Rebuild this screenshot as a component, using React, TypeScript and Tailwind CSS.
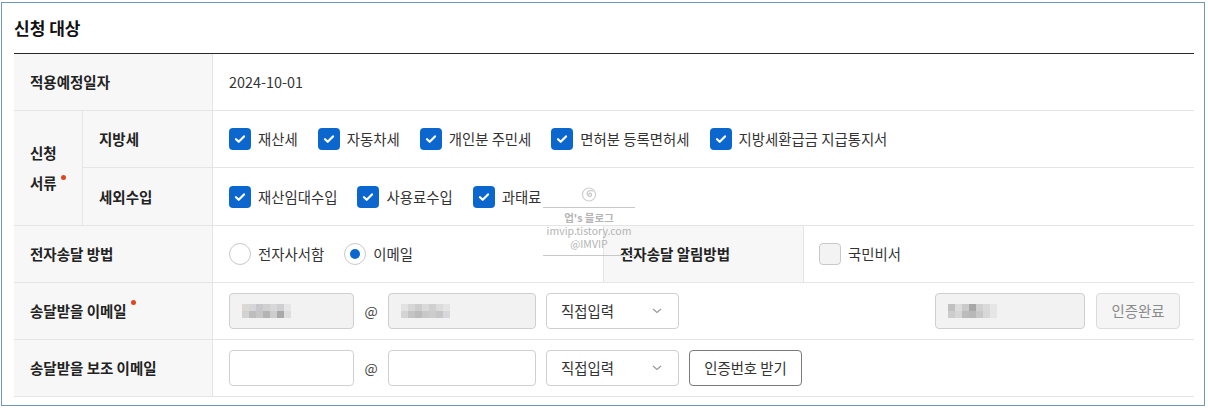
const font = { fontFamily: '"Noto Sans CJK KR", "Noto Sans", sans-serif' };

function CheckBox({ checked = true }: { checked?: boolean }) {
  if (!checked) {
    return <span className="w-[22px] h-[22px] rounded-[4px] border border-[#c9c9c9] bg-[#f3f3f3] shrink-0" />;
  }
  return (
    <span className="w-[22px] h-[22px] rounded-[4px] bg-[#0b67cd] shrink-0 flex items-center justify-center">
      <svg width="14" height="14" viewBox="0 0 14 14" fill="none">
        <path d="M3 7.2l2.7 2.6L11 4.4" stroke="white" strokeWidth="2.2" strokeLinecap="round" strokeLinejoin="round" />
      </svg>
    </span>
  );
}

function Check({ label, checked = true }: { label: string; checked?: boolean }) {
  return (
    <label className="flex items-center gap-[7px] text-[14.4px] text-[#333]">
      <CheckBox checked={checked} />
      {label}
    </label>
  );
}

function Radio({ label, checked }: { label: string; checked?: boolean }) {
  return (
    <label className="flex items-center gap-[7px] text-[14.4px] text-[#333]">
      <span className="w-[22px] h-[22px] rounded-full border border-[#c9c9c9] bg-white flex items-center justify-center shrink-0">
        {checked && <span className="w-[10px] h-[10px] rounded-full bg-[#0b67cd]" />}
      </span>
      {label}
    </label>
  );
}

// pixelated (blurred) placeholder
function Blur({ cells }: { cells: string[] }) {
  return (
    <div className="grid grid-cols-[repeat(7,7px)] grid-rows-[7px_7px]">
      {cells.map((c, i) => (
        <span key={i} style={{ backgroundColor: c }} />
      ))}
    </div>
  );
}

const blurA = ['#dcd8d4', '#d6d6da', '#c8c8cc', '#d0d0d0', '#d8d8d8', '#cfcfd2', '#e6e6e6', '#d2d2d2', '#bdbdbd', '#c6c6c6', '#b4b4b4', '#cdcdcd', '#a9a9a9', '#dedede'];
const blurB = ['#e2e2e2', '#d6d6d6', '#cccccc', '#dadada', '#d0d0d0', '#dcdcdc', '#e4e4e4', '#d4d4d4', '#c4c4c4', '#bcbcbc', '#c8c8c8', '#cccccc', '#c6c6c6', '#d8d8dc'];
const blurC = ['#c0c0c0', '#dcdcdc', '#cacaca', '#a8a8a8', '#d0d0d0', '#dadada', '#e6e6e6', '#cccccc', '#d6d6d6', '#bcbcbc', '#b8b8b8', '#c8c8c8', '#d8d8d8', '#e6e6e6'];

function Input({ w, disabled, blur }: { w: string; disabled?: boolean; blur?: string[] }) {
  return (
    <div className={`${w} h-[36px] rounded-[4px] border border-[#cfcfcf] flex items-center pl-[12px] ${disabled ? 'bg-[#f2f2f2]' : 'bg-white'}`}>
      {blur && <Blur cells={blur} />}
    </div>
  );
}

function Select() {
  return (
    <div className="w-[133px] h-[36px] rounded-[4px] border border-[#cfcfcf] bg-white flex items-center justify-between pl-[14px] pr-[16px] text-[14.4px] text-[#333]">
      직접입력
      <svg width="10" height="6" viewBox="0 0 10 6" fill="none">
        <path d="M1 1l4 3.5L9 1" stroke="#9a9a9a" strokeWidth="1.2" />
      </svg>
    </div>
  );
}

function Req() {
  return <span className="inline-block w-[5px] h-[5px] rounded-full bg-[#e0461e] relative -top-[9px] ml-[4px]" />;
}

function Label({ children, w, pl = 'pl-[16px]' }: { children: React.ReactNode; w: string; pl?: string }) {
  return (
    <div className={`${w} shrink-0 self-stretch bg-[#f7f7f7] border-r border-[#e5e5e5] flex items-center ${pl} text-[14.5px] font-bold text-[#222]`}>
      {children}
    </div>
  );
}

export default function App() {
  return (
    <div className="w-[1208px] h-[412px] bg-white" style={font}>
      <div className="relative ml-[1px] mt-[2px] w-[1204px] h-[404px] border border-[#7396bb] pl-[12px] pr-[10px]">
        <div className="h-[50px] flex items-center text-[17px] font-bold text-[#111]">신청 대상</div>
        <div className="border-t border-[#2a2a2a]">
          {/* 적용예정일자 */}
          <div className="h-[57px] flex items-center border-b border-[#e5e5e5]">
            <Label w="w-[199px]">적용예정일자</Label>
            <div className="pl-[16px] text-[14.4px] text-[#333]">2024-10-01</div>
          </div>

          {/* 신청 서류 */}
          <div className="flex border-b border-[#e5e5e5]">
            <div className="w-[69px] shrink-0 bg-[#f7f7f7] border-r border-[#e5e5e5] flex items-center pl-[16px] text-[14.5px] font-bold text-[#222] leading-[30px]">
              <div>
                신청
                <br />
                서류
                <Req />
              </div>
            </div>
            <div className="flex-1">
              <div className="h-[57px] flex items-center border-b border-[#e5e5e5]">
                <Label w="w-[130px]">지방세</Label>
                <div className="flex items-center gap-[20px] pl-[16px]">
                  <Check label="재산세" />
                  <Check label="자동차세" />
                  <Check label="개인분 주민세" />
                  <Check label="면허분 등록면허세" />
                  <Check label="지방세환급금 지급통지서" />
                </div>
              </div>
              <div className="h-[57px] flex items-center">
                <Label w="w-[130px]">세외수입</Label>
                <div className="flex items-center gap-[20px] pl-[16px]">
                  <Check label="재산임대수입" />
                  <Check label="사용료수입" />
                  <Check label="과태료" />
                </div>
              </div>
            </div>
          </div>

          {/* 전자송달 방법 */}
          <div className="h-[57px] flex items-center border-b border-[#e5e5e5]">
            <Label w="w-[199px]">전자송달 방법</Label>
            <div className="w-[390px] flex items-center gap-[20px] pl-[16px]">
              <Radio label="전자사서함" />
              <Radio label="이메일" checked />
            </div>
            <div className="w-[200px] self-stretch border-l border-[#e5e5e5] flex">
              <Label w="w-[200px]">전자송달 알림방법</Label>
            </div>
            <div className="pl-[16px]">
              <Check label="국민비서" checked={false} />
            </div>
          </div>

          {/* 송달받을 이메일 */}
          <div className="h-[57px] flex items-center border-b border-[#e5e5e5]">
            <Label w="w-[199px]">
              송달받을 이메일
              <Req />
            </Label>
            <div className="flex-1 flex items-center pl-[16px] pr-[14px]">
              <Input w="w-[125px]" disabled blur={blurA} />
              <span className="w-[34px] text-center text-[14px] text-[#444]">@</span>
              <Input w="w-[148px]" disabled blur={blurB} />
              <div className="ml-[10px]">
                <Select />
              </div>
              <div className="ml-auto flex items-center gap-[11px]">
                <Input w="w-[150px]" disabled blur={blurC} />
                <button className="w-[84px] h-[36px] rounded-[4px] border border-[#dcdcdc] bg-[#f5f5f5] text-[14.4px] text-[#8a8a8a]">
                  인증완료
                </button>
              </div>
            </div>
          </div>

          {/* 송달받을 보조 이메일 */}
          <div className="h-[57px] flex items-center border-b border-[#e5e5e5]">
            <Label w="w-[199px]">송달받을 보조 이메일</Label>
            <div className="flex items-center pl-[16px]">
              <Input w="w-[125px]" />
              <span className="w-[34px] text-center text-[14px] text-[#444]">@</span>
              <Input w="w-[148px]" />
              <div className="ml-[10px]">
                <Select />
              </div>
              <button className="ml-[10px] w-[113px] h-[36px] rounded-[4px] border border-[#7a7a7a] bg-white text-[14.4px] text-[#333]">
                인증번호 받기
              </button>
            </div>
          </div>
        </div>

        {/* watermark */}
        <div className="absolute left-[541px] top-[183px] w-[92px] flex flex-col items-center text-[#b4b4b4] pointer-events-none">
          <svg width="18" height="17" viewBox="0 0 18 17" fill="none">
            <circle cx="9" cy="8.5" r="6.5" stroke="#cfcfcf" strokeWidth="1.2" />
            <path d="M9 8.5c0-1.1 1.1-1.7 2-1.1 1.1.8.6 2.6-.8 2.9-2 .4-3.4-1.5-3-3.3.5-2.3 3.3-3.2 5.2-1.9" stroke="#c4c4c4" strokeWidth="1.2" strokeLinecap="round" />
          </svg>
          <div className="w-[92px] h-px bg-[#c8c8c8] mt-[4px]" />
          <div className="text-[10.5px] font-bold leading-[13px] mt-[3px]">업's 블로그</div>
          <div className="text-[10.5px] leading-[13px]">imvip.tistory.com</div>
          <div className="text-[10.5px] leading-[13px]">@IMVIP</div>
          <div className="w-[92px] h-px bg-[#c8c8c8] mt-[5px]" />
        </div>
      </div>
    </div>
  );
}
